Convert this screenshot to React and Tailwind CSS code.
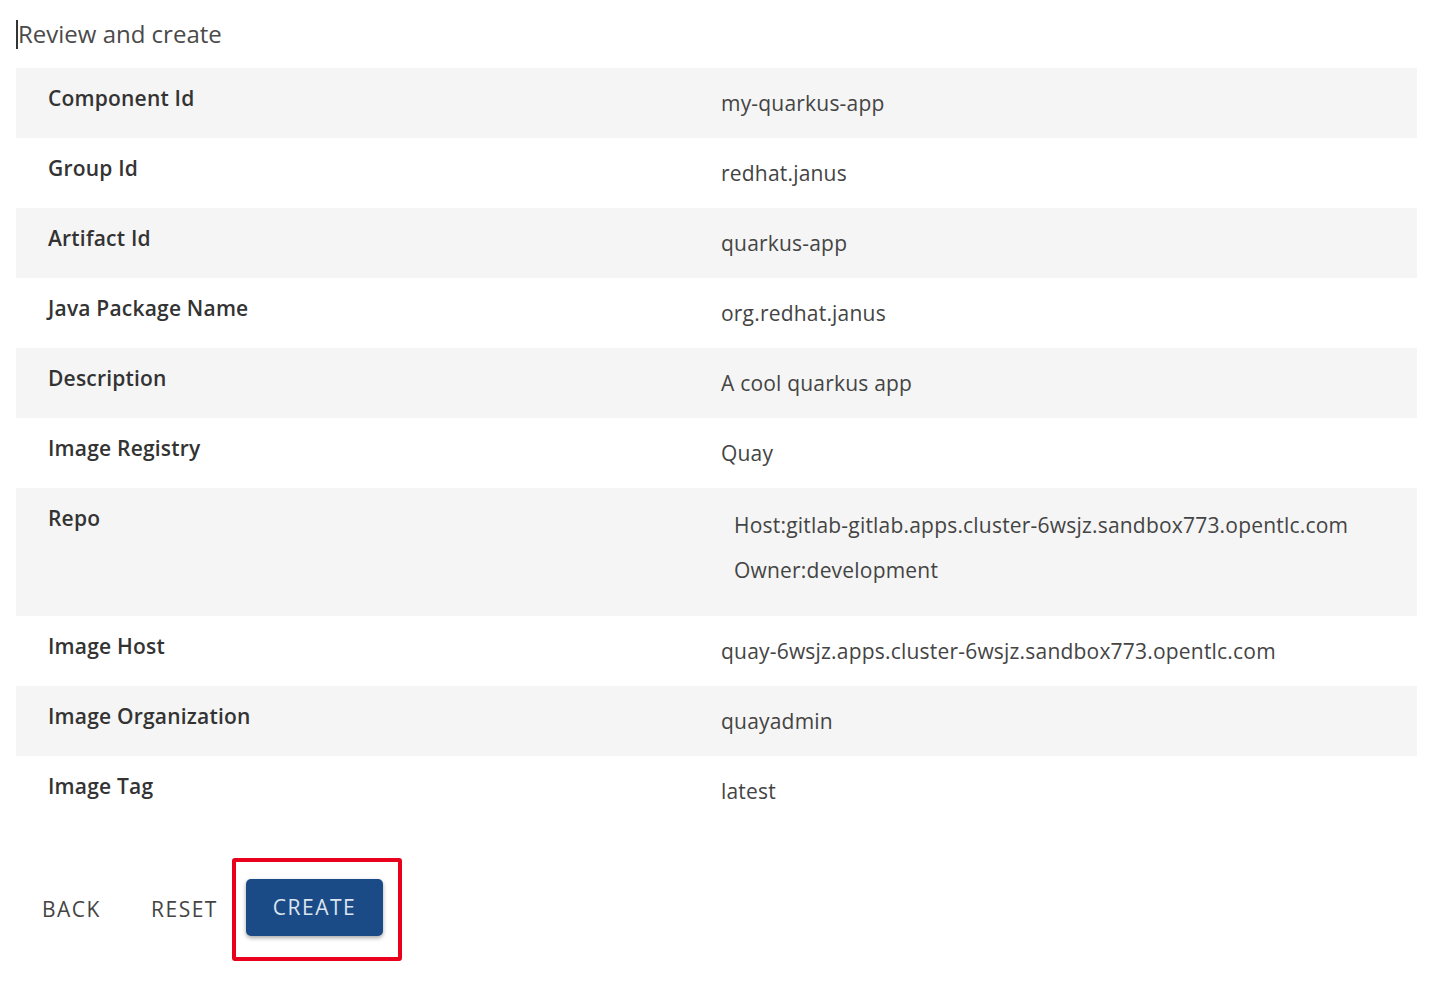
export default function App() {
  const rows = [
    ["Component Id", "my-quarkus-app"],
    ["Group Id", "redhat.janus"],
    ["Artifact Id", "quarkus-app"],
    ["Java Package Name", "org.redhat.janus"],
    ["Description", "A cool quarkus app"],
    ["Image Registry", "Quay"],
    ["Repo", null],
    ["Image Host", "quay-6wsjz.apps.cluster-6wsjz.sandbox773.opentlc.com"],
    ["Image Organization", "quayadmin"],
    ["Image Tag", "latest"],
  ];
  return (
    <div className="min-h-[988px] w-[1431px] bg-white" style={{ fontFamily: "'Open Sans', sans-serif" }}>
      <div className="px-4 pt-[19px]">
        <div className="flex h-[30px] items-center">
          <span className="h-[29px] w-[2px] bg-[#333]"></span>
          <span className="text-[24px] font-normal text-[#4a4a4a] leading-none">Review and create</span>
        </div>
        <div className="mt-[19px] w-[1401px]">
          {rows.map(([k, v], i) => (
            <div key={k} className={`flex ${i % 2 === 0 ? "bg-[#f5f5f5]" : "bg-white"} ${v === null ? "h-[128px]" : "h-[70px]"}`}>
              <div className="w-[705px] pl-8 pt-[16px] text-[21px] font-semibold text-[#333] leading-[28px] tracking-[0.2px]">{k}</div>
              <div className="pt-[21px] text-[21px] text-[#444] leading-[28px] tracking-[0.2px]">
                {v === null ? (
                  <div className="pl-[13px] pt-[2px]">
                    <div className="leading-[28px]">Host:gitlab-gitlab.apps.cluster-6wsjz.sandbox773.opentlc.com</div>
                    <div className="mt-[17px] leading-[28px]">Owner:development</div>
                  </div>
                ) : (
                  v
                )}
              </div>
            </div>
          ))}
        </div>
        <div className="mt-[32px] flex items-center">
          <button className="ml-[26px] w-[58px] py-2 text-left text-[21px] text-[#444] tracking-[1.5px]">BACK</button>
          <button className="ml-[51px] w-[69px] py-2 text-left text-[21px] text-[#444] tracking-[1.5px]">RESET</button>
          <div className="ml-[12px] rounded-[3px] border-[4px] border-[#e8001c] pl-[10px] pr-[15px] pt-[17px] pb-[21px]">
            <button className="h-[57px] w-[137px] rounded-[5px] bg-[#1b4b87] text-[21px] text-[#dbe4ef] tracking-[1.5px] shadow-[0_2px_4px_rgba(0,0,0,0.35)]">CREATE</button>
          </div>
        </div>
      </div>
    </div>
  );
}
